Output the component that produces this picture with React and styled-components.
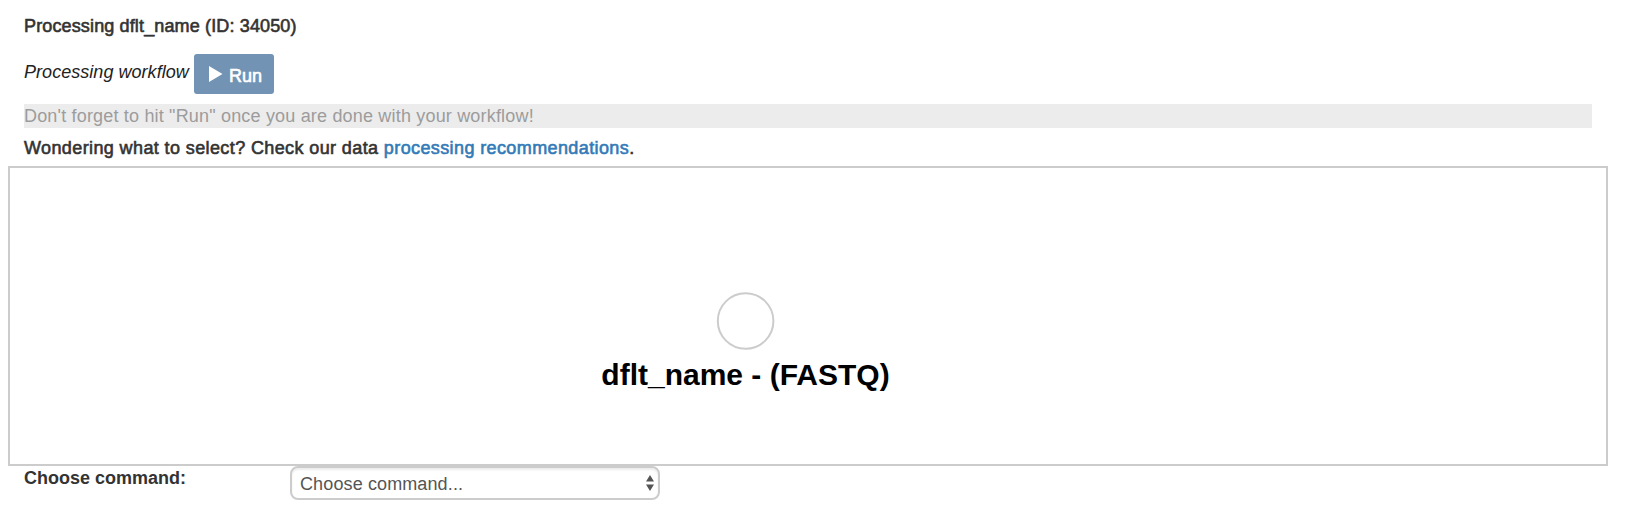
import React from "react";
import styled, { createGlobalStyle } from "styled-components";

const GlobalStyle = createGlobalStyle`
  * { box-sizing: border-box; }
  body {
    margin: 0;
    background: #fff;
    color: #333;
    font: 18px/24px "Liberation Sans", Arial, sans-serif;
    font-variant-ligatures: none;
  }
`;

const Page = styled.main`
  width: 1600px;
  margin-left: 8px;
  padding-top: 14px;
`;

const Header = styled.header`
  display: flex;
  flex-direction: column;
  align-items: stretch;
  padding: 0 16px;
`;

const Line = styled.span`
  white-space: pre;
  letter-spacing: ${(p) => p.$track || 0}px;
  -webkit-text-stroke: ${(p) => (p.$medium ? "0.6px currentColor" : "0")};
`;

const Title = styled.div`
  height: 40px;
`;

const WorkflowRow = styled.div`
  display: flex;
  height: 40px;
  gap: 5px;
  color: #222;
  font-style: italic;
`;

const WorkflowLabel = styled.div`
  width: 165px;
  padding-top: 6px;
`;

const RunButton = styled.button`
  display: flex;
  align-items: flex-start;
  gap: 6px;
  width: 80px;
  height: 40px;
  padding: 10px 0 0 15px;
  border: 0;
  border-radius: 3px;
  background: #7293b3;
  color: #fff;
  font: 18px/24px "Liberation Sans", Arial, sans-serif;
`;

const PlayIcon = styled.svg`
  width: 14px;
  height: 16px;
  margin-top: 2px;
  flex: none;
`;

const Notice = styled.div`
  height: 24px;
  margin-top: 10px;
  background: #ececec;
  color: #9c9c9c;
`;

const Advice = styled.div`
  height: 38px;
  padding-top: 8px;
`;

const Link = styled.a`
  color: #337ab7;
  text-decoration: none;
`;

const Canvas = styled.section`
  position: relative;
  height: 300px;
  border: 2px solid #ccc;
`;

const Node = styled.div`
  position: absolute;
  left: 585px;
  top: 124px;
  width: 301px;
  display: flex;
  flex-direction: column;
  align-items: center;
`;

const NodeCircle = styled.svg`
  width: 59px;
  height: 58px;
`;

const NodeLabel = styled.div`
  margin-top: 8px;
  color: #000;
  font-size: 30px;
  line-height: 34px;
  font-weight: bold;
  white-space: nowrap;
`;

const CommandRow = styled.div`
  display: flex;
  padding-left: 16px;
`;

const CommandLabel = styled.label`
  width: 266px;
  font-weight: bold;
`;

const Select = styled.button`
  display: flex;
  align-items: center;
  justify-content: space-between;
  width: 370px;
  height: 34px;
  padding: 1px 4px 0 8px;
  border: 2px solid #ccc;
  border-radius: 8px;
  background: #fff;
  box-shadow: inset 0 2px 2px rgba(0, 0, 0, 0.075);
  color: #555;
  font: 18px/24px "Liberation Sans", Arial, sans-serif;
`;

const Arrows = styled.svg`
  width: 8px;
  height: 16px;
  margin-bottom: 2px;
`;

export default function App() {
  return (
    <>
      <GlobalStyle />
      <Page>
        <Header>
          <Title>
            <Line $medium $track={0.14}>Processing dflt_name (ID: 34050)</Line>
          </Title>
          <WorkflowRow>
            <WorkflowLabel>
              <Line $track={0.04}>Processing workflow</Line>
            </WorkflowLabel>
            <RunButton>
              <PlayIcon viewBox="0 0 14 16">
                <path d="M0 0L13.5 8L0 16Z" fill="currentColor" />
              </PlayIcon>
              <Line $medium>Run</Line>
            </RunButton>
          </WorkflowRow>
          <Notice>
            <Line $track={0.18}>Don't forget to hit "Run" once you are done with your workflow!</Line>
          </Notice>
          <Advice>
            <Line $medium $track={0.39}>
              Wondering what to select? Check our data <Link href="#">processing recommendations</Link>.
            </Line>
          </Advice>
        </Header>
        <Canvas>
          <Node>
            <NodeCircle viewBox="0 0 59 58">
              <circle cx="29.6" cy="29" r="27.8" fill="#fff" stroke="#ccc" strokeWidth="2" />
            </NodeCircle>
            <NodeLabel>dflt_name - (FASTQ)</NodeLabel>
          </Node>
        </Canvas>
        <CommandRow>
          <CommandLabel>
            <Line>Choose command:</Line>
          </CommandLabel>
          <Select>
            <Line $track={0.12}>Choose command...</Line>
            <Arrows viewBox="0 0 8 16">
              <path d="M0 6.5L4 0L8 6.5ZM0 9.5L4 16L8 9.5Z" fill="#555" />
            </Arrows>
          </Select>
        </CommandRow>
      </Page>
    </>
  );
}
